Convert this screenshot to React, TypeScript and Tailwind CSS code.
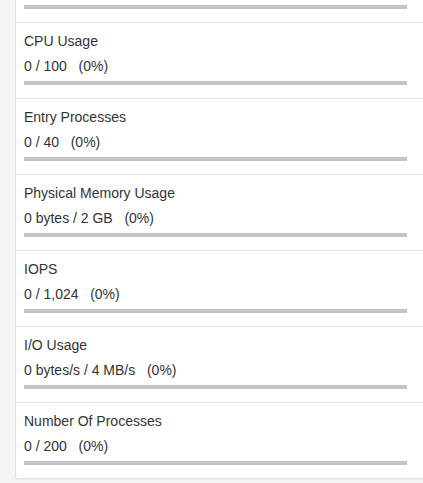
import React from "react";

const rows = [
  { title: "CPU Usage", value: "0 / 100", pct: "(0%)" },
  { title: "Entry Processes", value: "0 / 40", pct: "(0%)" },
  { title: "Physical Memory Usage", value: "0 bytes / 2 GB", pct: "(0%)" },
  { title: "IOPS", value: "0 / 1,024", pct: "(0%)" },
  { title: "I/O Usage", value: "0 bytes/s / 4 MB/s", pct: "(0%)" },
  { title: "Number Of Processes", value: "0 / 200", pct: "(0%)" },
];

function UsageBar({ top = "mt-[5px]" }: { top?: string }) {
  return <div className={`${top} h-[4px] w-full bg-[#c4c4c4]`} />;
}

function UsageRow({ title, value, pct }: { title: string; value: string; pct: string }) {
  return (
    <div className="border-t border-[#e3e3e3] pt-[8px] pb-[13px] pl-[8px] pr-[16px]">
      <div className="leading-[20px] mb-[5px]">{title}</div>
      <div className="leading-[20px] whitespace-pre">
        {value}
        {"   "}
        {pct}
      </div>
      <UsageBar />
    </div>
  );
}

export default function App() {
  return (
    <div
      className="w-[423px] h-[483px] bg-[#f4f4f4] pl-[15px] overflow-hidden text-[14px] text-[#333]"
      style={{ fontFamily: '"Liberation Sans", Arial, sans-serif' }}
    >
      <div className="bg-white border-l border-b border-[#e0e0e0] rounded-bl-[3px] shadow-[0_1px_2px_rgba(0,0,0,0.04)]">
        <div className="pl-[8px] pr-[16px] pt-[5px] pb-[13px]">
          <UsageBar top="mt-0" />
        </div>
        {rows.map((r) => (
          <UsageRow key={r.title} {...r} />
        ))}
      </div>
    </div>
  );
}
